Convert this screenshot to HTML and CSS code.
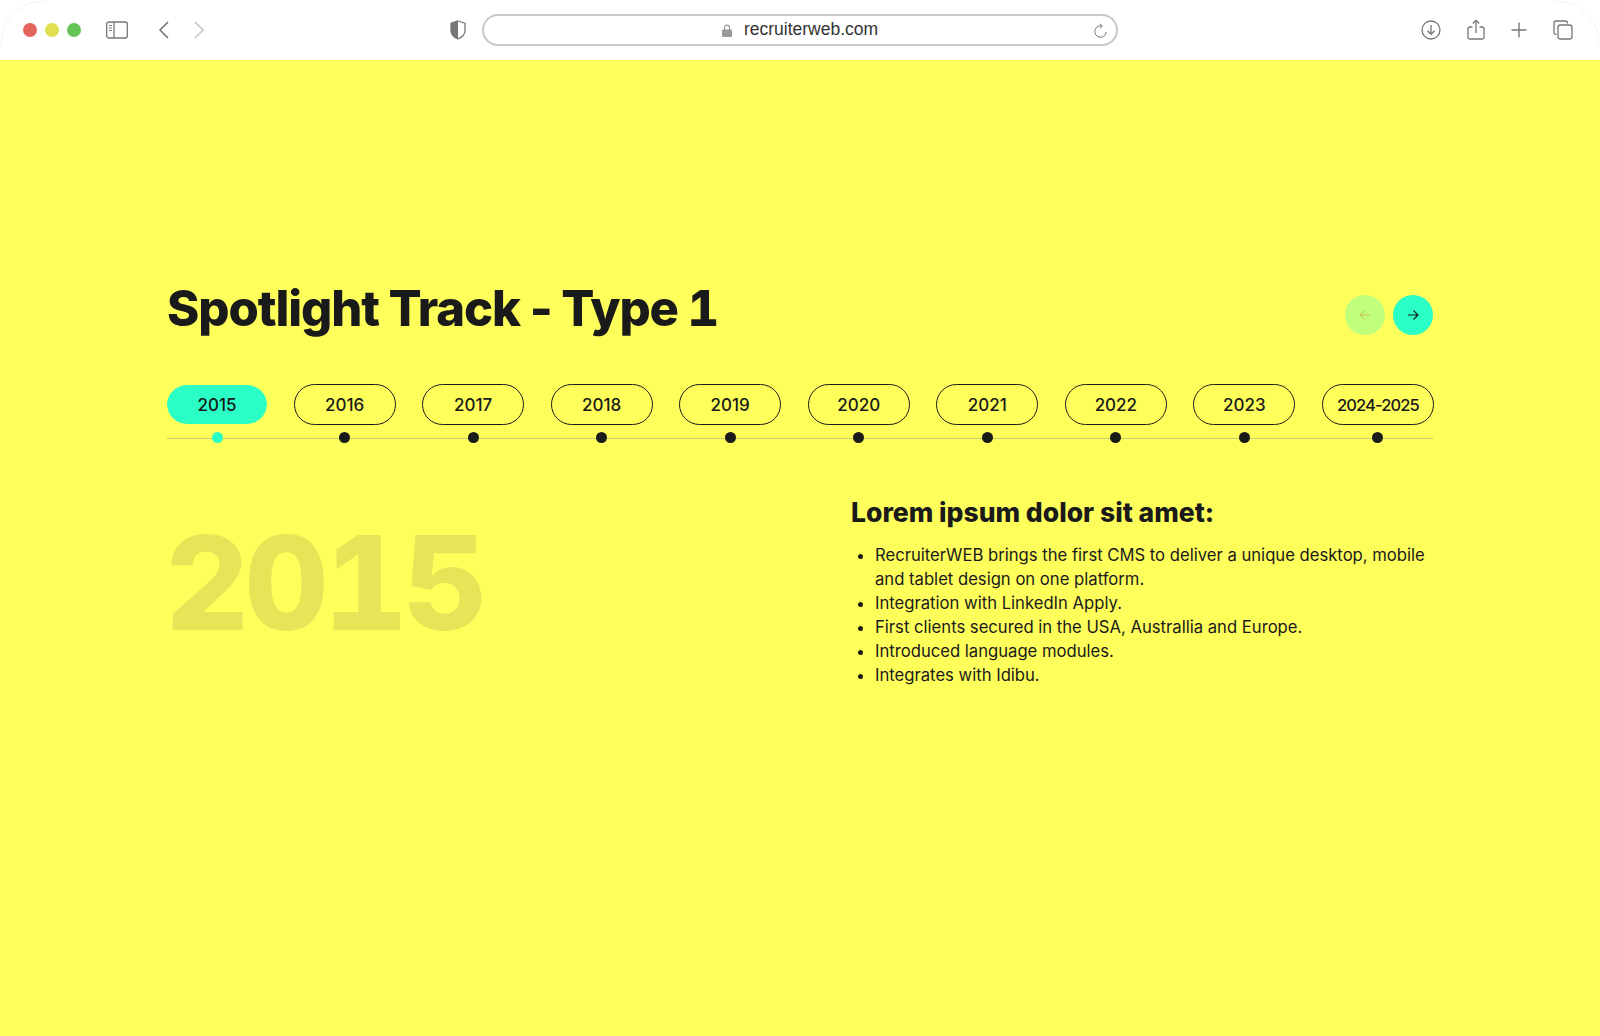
FILE: index.html
```html
<!DOCTYPE html>
<html lang="en">
<head>
<meta charset="utf-8">
<title>Spotlight Track</title>
<link rel="stylesheet" href="styles.css">
</head>
<body>
<header class="toolbar">
  <svg class="corner corner-left" width="46" height="46" viewBox="0 0 46 46"><path d="M1 45C1 20 20 1 45 1" fill="none" stroke="#dcdcdc" stroke-width="1" stroke-dasharray="1 2"/></svg>
  <svg class="corner corner-right" width="46" height="46" viewBox="0 0 46 46"><path d="M1 1C26 1 45 20 45 45" fill="none" stroke="#dcdcdc" stroke-width="1" stroke-dasharray="1 2"/></svg>
  <div class="lights">
    <span class="light light-red"></span>
    <span class="light light-yellow"></span>
    <span class="light light-green"></span>
  </div>
  <svg class="icon-sidebar" width="22" height="18" viewBox="0 0 22 18" fill="none" stroke="#777" stroke-width="1.3"><rect x=".7" y="1" width="20.6" height="16" rx="2"/><path d="M8 1v16"/><path d="M3 4.500h3M3 7h3M3 9.500h3" stroke-width="1"/></svg>
  <svg class="icon-back" width="12" height="18" viewBox="0 0 12 18" fill="none" stroke="#6e6e6e" stroke-width="1.5"><path d="M10 1L2 9l8 8"/></svg>
  <svg class="icon-forward" width="12" height="18" viewBox="0 0 12 18" fill="none" stroke="#c4c4c4" stroke-width="1.5"><path d="M2 1l8 8-8 8"/></svg>
  <svg class="icon-shield" width="16" height="20" viewBox="0 0 16 20"><path d="M8 1l7 2.200v7.300c0 4-3 6.800-7 8.500-4-1.700-7-4.500-7-8.500V3.200z" fill="#fff" stroke="#777" stroke-width="1.300"/><path d="M8 1L1 3.200v7.300c0 4 3 6.800 7 8.500z" fill="#777"/></svg>
  <div class="urlbar">
    <svg class="icon-lock" width="10" height="13" viewBox="0 0 10 13"><path d="M2.500 6V3.700a2.500 2.500 0 0 1 5 0V6" fill="none" stroke="#999" stroke-width="1.200"/><rect y="5.500" width="10" height="7.500" rx="1.200" fill="#999"/></svg>
    <span class="url-text">recruiterweb.com</span>
    <svg class="icon-reload" width="15" height="16" viewBox="0 0 15 16" fill="none" stroke="#777" stroke-width="1"><path d="M9 3.100A5.700 5.700 0 1 0 13.200 8.800"/><path d="M6.800 .8L9.300 3.100 7 5.500"/></svg>
  </div>
  <div class="tools">
    <svg width="20" height="20" viewBox="0 0 20 20" fill="none" stroke="#777" stroke-width="1.300"><circle cx="10" cy="10" r="9"/><path d="M10 5v9M6.500 10.800L10 14.300l3.500-3.500"/></svg>
    <svg width="18" height="22" viewBox="0 0 18 22" fill="none" stroke="#777" stroke-width="1.300"><path d="M5.500 8H2.500a1.500 1.500 0 0 0-1.500 1.500v9A1.500 1.500 0 0 0 2.500 20h13a1.500 1.500 0 0 0 1.500-1.500v-9A1.500 1.500 0 0 0 15.500 8h-3"/><path d="M9 14V1.500M5.800 4.500L9 1.300l3.200 3.200"/></svg>
    <svg width="16" height="16" viewBox="0 0 16 16" fill="none" stroke="#777" stroke-width="1.400"><path d="M8 .5v15M.5 8h15"/></svg>
    <svg width="20" height="20" viewBox="0 0 20 20" fill="none" stroke="#777" stroke-width="1.300"><path d="M3.500 14.500H3A2 2 0 0 1 1 12.500V3a2 2 0 0 1 2-2h9.500a2 2 0 0 1 2 2v.5"/><rect x="5" y="5" width="14" height="14" rx="2.500"/></svg>
  </div>
</header>
<main class="page">
  <div class="heading-row">
    <h1 class="title">Spotlight Track - Type <span class="title-num">1</span></h1>
    <div class="arrows">
      <button class="arrow arrow-off" type="button"><svg width="12" height="12" viewBox="0 0 12 12" fill="none" stroke="currentColor" stroke-width="1"><path d="M11 6H1M5.500 1.500L1 6l4.500 4.500"/></svg></button>
      <button class="arrow" type="button"><svg width="12" height="12" viewBox="0 0 12 12" fill="none" stroke="currentColor" stroke-width="1.100"><path d="M1 6h10M6.500 1.500L11 6l-4.500 4.500"/></svg></button>
    </div>
  </div>
  <nav class="years">
    <div class="year year-active"><span class="pill">2015</span><span class="dot"></span></div>
    <div class="year"><span class="pill">2016</span><span class="dot"></span></div>
    <div class="year"><span class="pill">2017</span><span class="dot"></span></div>
    <div class="year"><span class="pill">2018</span><span class="dot"></span></div>
    <div class="year"><span class="pill">2019</span><span class="dot"></span></div>
    <div class="year"><span class="pill">2020</span><span class="dot"></span></div>
    <div class="year"><span class="pill">2021</span><span class="dot"></span></div>
    <div class="year"><span class="pill">2022</span><span class="dot"></span></div>
    <div class="year"><span class="pill">2023</span><span class="dot"></span></div>
    <div class="year year-last"><span class="pill pill-wide">2024-2025</span><span class="dot"></span></div>
  </nav>
  <section class="detail">
    <div class="big-year">2015</div>
    <div class="copy">
      <h2 class="copy-title">Lorem ipsum dolor sit amet:</h2>
      <ul class="copy-list">
        <li>RecruiterWEB brings the first CMS to deliver a unique desktop, mobile and tablet design on one platform.</li>
        <li>Integration with LinkedIn Apply.</li>
        <li>First clients secured in the USA, Australlia and Europe.</li>
        <li>Introduced language modules.</li>
        <li>Integrates with Idibu.</li>
      </ul>
    </div>
  </section>
</main>
</body>
</html>
```
FILE: styles.css
```css
* { box-sizing: border-box; }
html, body { margin: 0; height: 100%; }
body {
  display: flex;
  flex-direction: column;
  height: 1036px;
  overflow: hidden;
  background: #ffff5c;
  color: #1a1a1a;
  font-family: Inter, "Liberation Sans", sans-serif;
}
.toolbar {
  position: relative;
  flex: none;
  display: flex;
  align-items: center;
  height: 60px;
  padding-left: 23px;
  background: #fff;
}
.corner { position: absolute; top: 0; }
.corner-left { left: 0; }
.corner-right { right: 0; }
.lights { display: flex; gap: 8px; }
.light { width: 14px; height: 14px; border-radius: 50%; }
.light-red { background: #e5645c; }
.light-yellow { background: #e0e050; }
.light-green { background: #62c554; }
.icon-sidebar { margin-left: 25px; }
.icon-back { margin-left: 30px; }
.icon-forward { margin-left: 23px; }
.icon-shield { margin-left: 245px; }
.urlbar {
  position: relative;
  display: flex;
  align-items: center;
  justify-content: center;
  gap: 12px;
  width: 636px;
  height: 32px;
  margin-left: 16px;
  border: 2px solid #c8c8c8;
  border-radius: 16px;
}
.url-text {
  padding-bottom: 2px;
  font-size: 17.5px;
  color: #333;
  font-family: "Liberation Sans", sans-serif;
}
.icon-reload { position: absolute; right: 8px; top: 7px; }
.tools {
  display: flex;
  align-items: center;
  justify-content: space-between;
  width: 152px;
  margin-left: 303px;
}
.page {
  flex: 1;
  padding: 225px 167px 0;
}
.heading-row {
  display: flex;
  justify-content: space-between;
  align-items: flex-start;
  height: 99px;
}
.title {
  margin: -5px 0 0;
  font-size: 49px;
  line-height: 58px;
  font-weight: 800;
  letter-spacing: -1.1px;
}
.title-num { font-feature-settings: "tnum"; }
.arrows { display: flex; gap: 8px; margin-top: 10px; }
.arrow {
  display: flex;
  align-items: center;
  justify-content: center;
  width: 40px;
  height: 40px;
  padding: 0;
  border: 0;
  border-radius: 50%;
  background: #2affc6;
  color: #1a1a1a;
}
.arrow-off { background: #bfff7c; color: #d2b94e; }
.years {
  display: flex;
  justify-content: space-between;
  height: 55px;
  border-bottom: 1px solid #c9cc7a;
}
.year {
  display: flex;
  flex-direction: column;
  align-items: center;
  gap: 7px;
}
.year-last { margin-right: -1px; }
.pill {
  flex: none;
  display: flex;
  align-items: center;
  justify-content: center;
  width: 102px;
  height: 41px;
  border: 1px solid #1a1a1a;
  border-radius: 21px;
  font-size: 17px;
  font-weight: 500;
}
.pill-wide { width: 112px; font-size: 16.500px; letter-spacing: -.9px; }
.year-active .pill {
  width: 100px;
  background: #2affc6;
  background-clip: padding-box;
  border-width: 1px 0;
  border-color: transparent;
}
.dot {
  flex: none;
  width: 11px;
  height: 11px;
  border-radius: 50%;
  background: #1a1a1a;
}
.year-active .dot { background: #2affc6; }
.detail {
  display: grid;
  grid-template-columns: 684px 1fr;
  padding-top: 58px;
}
.big-year {
  margin: 21px 0 0 -2px;
  font-size: 130px;
  line-height: 130px;
  font-weight: 800;
  letter-spacing: -4.500px;
  color: #e6e557;
  font-feature-settings: "tnum";
}
.copy-title {
  margin: 0 0 16px;
  font-size: 26.500px;
  line-height: 30px;
  font-weight: 800;
}
.copy-list {
  margin: 0;
  padding-left: 24px;
  font-size: 16.650px;
  line-height: 24px;
}
```
